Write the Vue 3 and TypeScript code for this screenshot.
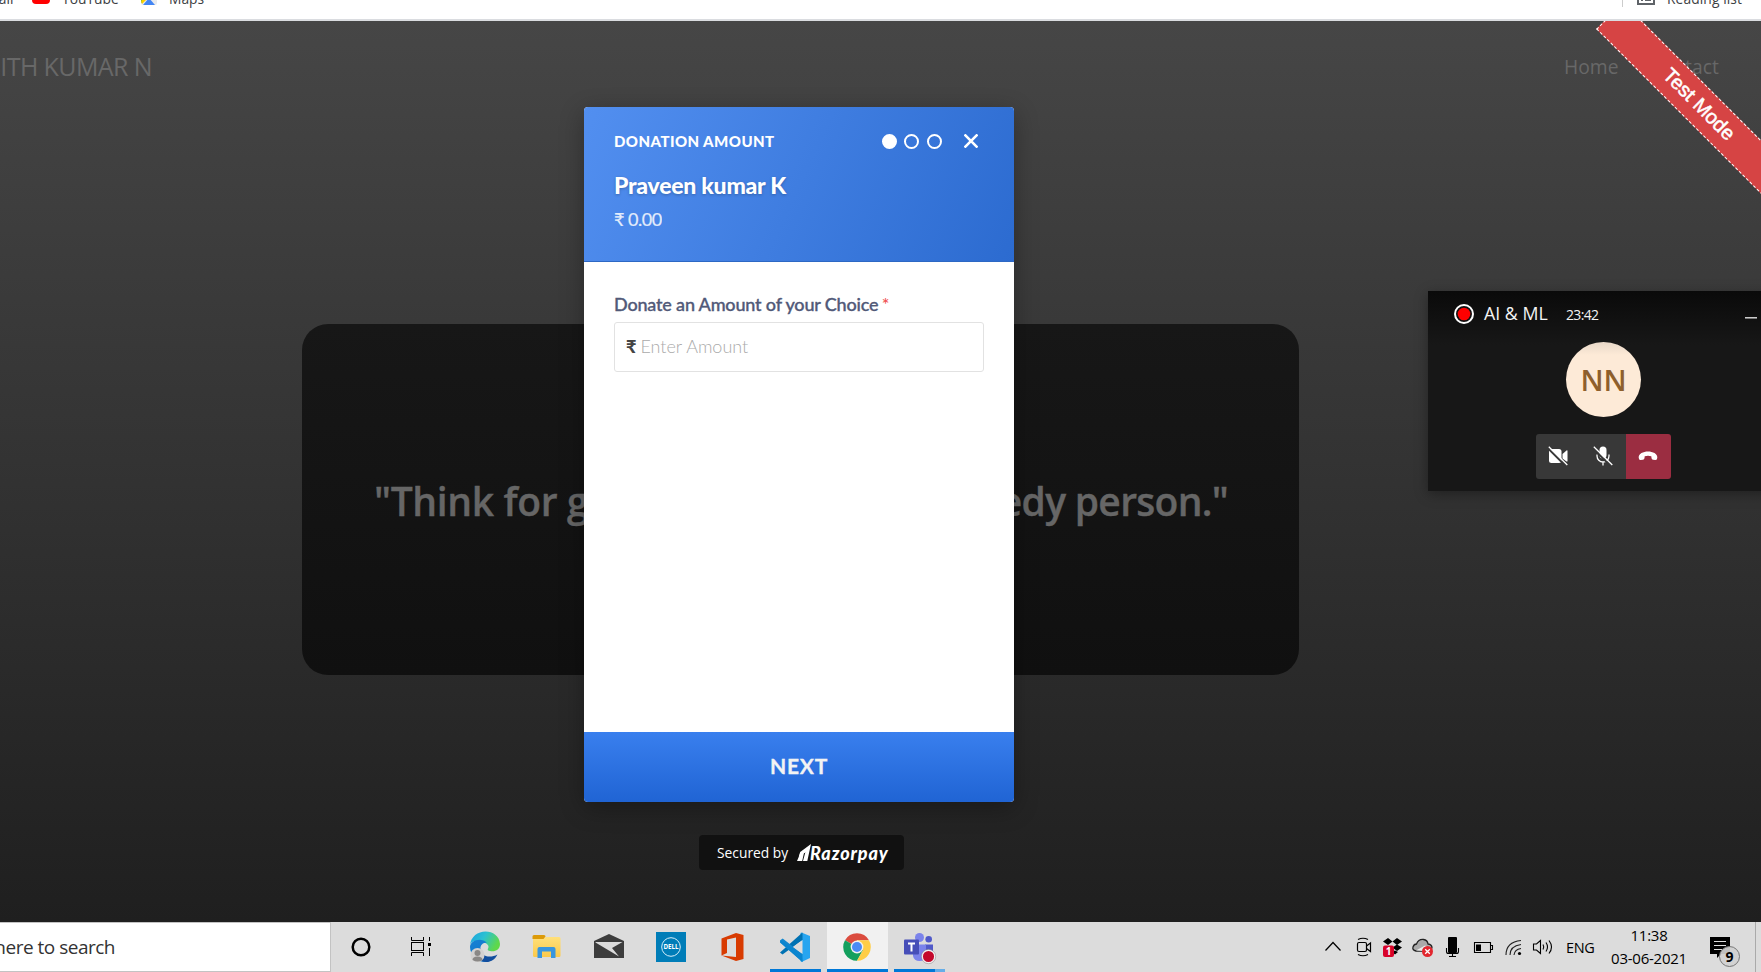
<script setup lang="ts">
const digits = [true, false, false]
const merchant = 'Praveen kumar K'
</script>

<template>
  <div class="screen">
    <header class="bookmarks">
      <span class="bm bm-mail">Gmail</span>
      <span class="yt"></span>
      <span class="bm bm-yt">YouTube</span>
      <svg class="maps" width="16" height="16" viewBox="0 0 16 16">
        <rect width="16" height="16" rx="2" fill="#e8eaed" />
        <path d="M0 2v12L11 3V0H2z" fill="#34a853" />
        <path d="M0 12l10-10 2 2L1 15z" fill="#fbd000" />
        <path d="M2 16l6-7 6 7z" fill="#4285f4" />
      </svg>
      <span class="bm bm-maps">Maps</span>
      <span class="spacer"></span>
      <span class="bm-divider"></span>
      <svg class="list-ico" width="18" height="18" viewBox="0 0 18 18" fill="none" stroke="#5f6368" stroke-width="2">
        <rect x="1" y="1" width="16" height="15" /><path d="M4 8h2M4 12h2M8 8h6M8 12h6" />
      </svg>
      <span class="bm bm-list">Reading list</span>
    </header>

    <main class="page">
      <nav class="nav">
        <span class="brand">ITH KUMAR N</span>
        <span class="link">Home</span>
        <span class="link contact">Contact</span>
      </nav>
      <section class="quote">
        <span class="q-left">"Think for g</span>
        <span class="q-right">edy person."</span>
      </section>

      <div class="ribbon"><span>Test Mode</span></div>

      <div class="modal">
        <div class="m-head">
          <div class="m-top">
            <span class="m-kind">DONATION AMOUNT</span>
            <span v-for="(on, i) in digits" :key="i" class="dot" :class="{ on }"></span>
            <svg class="close" width="14" height="14" viewBox="0 0 14 14" stroke="#fff" stroke-width="2.600"><path d="M.5.500l13 13M13.500.500L.5 13.500" /></svg>
          </div>
          <div class="m-name">{{ merchant }}</div>
          <div class="m-sum">₹ 0.00</div>
        </div>
        <div class="m-body">
          <label class="m-label">Donate an Amount of your Choice <i>*</i></label>
          <div class="m-input"><b>₹</b><span>Enter Amount</span></div>
        </div>
        <button class="m-next">NEXT</button>
      </div>

      <div class="secured">
        <span class="s-by">Secured by</span>
        <svg width="14" height="17" viewBox="0 0 14 17"><path d="M14 0L10.300 17H6l2.400-9-4.200 3zM3.200 9.500L7.400 7 5.200 17H0z" fill="#fff" /><path d="M14 0L3.200 8 1.800 12.500 9 8z" fill="#fff" /></svg>
        <span class="s-rzp">Razorpay</span>
      </div>

      <aside class="call">
        <div class="c-top">
          <svg width="20" height="20" viewBox="0 0 20 20"><circle cx="10" cy="10" r="9" fill="#111" stroke="#fff" stroke-width="2" /><circle cx="10" cy="10" r="6.300" fill="#f00" /></svg>
          <span class="c-name">AI &amp; ML</span>
          <span class="c-time">23:42</span>
          <span class="c-min"></span>
        </div>
        <div class="avatar">NN</div>
        <div class="c-actions">
          <span class="c-btn">
            <svg width="20" height="20" viewBox="0 0 20 20"><rect x="1" y="3" width="12.500" height="14" rx="2.500" fill="#fff" /><path d="M14.500 8l4-3.500q1-.5 1 .6v9.800q0 1-1 .5l-4-3z" fill="#fff" /><path d="M0 2.300l17.500 17.500" stroke="#383838" stroke-width="2" /><path d="M.8.800l18.500 18.200" stroke="#fff" stroke-width="1.300" /></svg>
          </span>
          <span class="c-btn">
            <svg width="20" height="20" viewBox="0 0 20 20"><rect x="6.500" y="0.500" width="7" height="12" rx="3.500" fill="#fff" /><path d="M4 8.500v1.500a6 6 0 0 0 12 0V8.500M10 16v3.500" fill="none" stroke="#fff" stroke-width="1.300" /><path d="M0 2.300l17.500 17.500" stroke="#383838" stroke-width="2" /><path d="M.8.800l18.500 18.200" stroke="#fff" stroke-width="1.300" /></svg>
          </span>
          <span class="c-btn end">
            <svg width="20" height="20" viewBox="0 0 20 20"><path d="M.7 11.800C.2 3.500 19.800 3.500 19.300 11.800q-.1 2.500-2 2.300l-2.200-.3q-1.500-.2-1.600-1.700l-.2-1.800q-3.300-1-6.600 0l-.2 1.800q-.1 1.500-1.600 1.700l-2.200.3Q.8 14.300.7 11.800z" fill="#fff" /></svg>
          </span>
        </div>
      </aside>
    </main>

    <footer class="taskbar">
      <div class="search"><span>Type here to search</span></div>
      <span class="app"><svg viewBox="0 0 62 50"><circle cx="31" cy="25" r="8.300" fill="none" stroke="#000" stroke-width="2.500" /></svg></span>
      <span class="app"><svg viewBox="0 0 62 50" fill="none" stroke="#000" stroke-width="1"><path d="M19.500 15v3.500h12V15M19.500 34v-3.500h12V34M37.500 15v4M37.500 26v8" /><rect x="19.500" y="20.500" width="12" height="8" /><path d="M36 21h3v3h-3z" fill="#000" stroke="none" /></svg></span>
      <span class="app">
        <svg viewBox="0 0 62 50">
          <defs>
            <linearGradient id="eg" x1="0" y1="0" x2="1" y2="0.400"><stop offset="0" stop-color="#1a9fe0" /><stop offset=".5" stop-color="#2bc1d2" /><stop offset="1" stop-color="#5fd84a" /></linearGradient>
            <linearGradient id="eb" x1="0" y1="0" x2="0.500" y2="1"><stop offset="0" stop-color="#1682d4" /><stop offset="1" stop-color="#1275c9" /></linearGradient>
          </defs>
          <path d="M16 24C17 5 45 5 46 22c0 6-5 8-10 7-4-.8-1.500-2-1.500-4.500 0-5-18.500-9-18.500-.5z" fill="url(#eg)" />
          <path d="M16 25c0-7 12-10 17-4-5-1-8 4-6 9 2 6 9 9 14 5-4 6-13 6.500-18.500 2Q16 32 16 25z" fill="url(#eb)" />
          <path d="M26.500 26c-1 8 9 11 17 6.500C38 44 23 41 24 32z" fill="#124e9e" />
          <circle cx="23.500" cy="33" r="7" fill="#d3d1d0" /><circle cx="23.500" cy="31" r="3" fill="#8a8886" /><path d="M18.500 38q0-3.500 5-3.500t5 3.500q-4.800 3-10 0z" fill="#8a8886" />
        </svg>
      </span>
      <span class="app">
        <svg viewBox="0 0 62 50">
          <defs><linearGradient id="fd" x1="0" y1="0" x2="0" y2="1"><stop offset="0" stop-color="#ffe07a" /><stop offset="1" stop-color="#fbc94b" /></linearGradient></defs>
          <path d="M17 17h10l3-2h13q1.500 0 1.500 1.500v17q0 1.500-1.500 1.500H18.500Q17 35 17 33.500z" fill="url(#fd)" /><path d="M16.500 14.500q0-1.500 1.500-1.500h10q1.500 0 1.500 1.500l-2 2.500h-11z" fill="#dc9a08" />
          <path d="M21.500 36V27q0-2 2-2h14q2 0 2 2v9H35v-6.500h-9V36z" fill="#3a96dd" />
        </svg>
      </span>
      <span class="app"><svg viewBox="0 0 62 50"><path d="M16 19l15-7 15 7v17H16z" fill="#3d3d3d" /><path d="M17.500 20h27L34 26l7 8.500L17.500 20.500z" fill="#dcdcdc" /></svg></span>
      <span class="app"><svg viewBox="0 0 62 50"><path d="M16 10h30v30H16z" fill="#007db8" /><circle cx="31" cy="25" r="9.300" fill="none" stroke="#d9f0fa" stroke-width="1" /><text x="31" y="27.300" text-anchor="middle" textLength="15" lengthAdjust="spacingAndGlyphs" class="dell">DELL</text></svg></span>
      <span class="app"><svg viewBox="0 0 62 50"><path d="M19.500 16.500L34 11l7.500 2v24L34 39l-14.500-5.500L34 35V15.500l-9 2V31l-5.500 2.500z" fill="#d83b01" /></svg></span>
      <span class="app">
        <svg viewBox="0 0 62 50"><path d="M37.500 10.500L46 14v22l-8.500 4-1-1V11z" fill="#27a5f0" /><path d="M16 30.500l2.500 2L38.500 18v-7.500z" fill="#0072b3" /><path d="M16.200 18.200l2.500-1.800L38.500 32v8L16.200 20.500z" fill="#1187cf" /><path d="M38.500 18v14L29 25z" fill="#dcdcdc" /><path d="M16.200 18.200v2.300L38.500 40l-.8-8z" fill="#0a85cf" /></svg>
        <i class="bar wide"></i>
      </span>
      <span class="app active">
        <svg viewBox="0 0 62 50">
          <path d="M31 25L19 18.200A13.800 13.800 0 0 1 43 18.200L31 18.200z" fill="#db4c3f" /><path d="M31 25L19 18.200A13.800 13.800 0 0 0 31 38.800L37 28z" fill="#14a05e" /><path d="M31 18.200H43A13.800 13.800 0 0 1 31 38.800L37 28z" fill="#ffcd46" /><circle cx="31" cy="25" r="6.400" fill="#f1f1f1" /><circle cx="31" cy="25" r="5" fill="#4a8bf5" />
        </svg>
        <i class="bar full"></i>
      </span>
      <span class="app">
        <svg viewBox="0 0 62 50">
          <circle cx="31.500" cy="15.500" r="4.500" fill="#7b83eb" /><circle cx="40.700" cy="17.300" r="3.300" fill="#5059c9" /><path d="M37 22.500h8v8q-1 5-8 4z" fill="#5059c9" /><path d="M25 22.500h13V33q-1 6-6.500 6T25 34z" fill="#7b83eb" />
          <rect x="16" y="17.500" width="15" height="15" rx="1" fill="#464eb8" /><path d="M20 21.500h7M23.500 21.500v8" stroke="#fff" stroke-width="2" />
          <circle cx="40.500" cy="34.500" r="6.300" fill="#c4092c" stroke="#f1f1f1" stroke-width="1.500" /><circle cx="40.500" cy="34.500" r="7.200" fill="none" stroke="#888" stroke-width=".5" />
        </svg>
        <i class="bar teams"></i>
      </span>
      <span class="spacer"></span>
      <div class="tray">
        <svg viewBox="0 0 30 50" fill="none" stroke="#000" stroke-width="1.200"><path d="M7.500 28.500l7.500-8 7.500 8" /></svg>
        <svg viewBox="0 0 30 50" fill="none" stroke="#000" stroke-width="1.200"><rect x="9.500" y="20.500" width="9" height="9" rx="1.500" /><path d="M18.500 24l4-3v8.500l-4-3M10 17.500q5-2.500 10 0M10 32.500q5 2.500 10 0" /></svg>
        <svg viewBox="0 0 30 50"><path d="M5 19.500L10 16l4.500 3.500L10 23zM14.500 19.500L19 16l5 3.500-5 3.500zM14.500 25.500l4.500-3 5 3-5 3.500zM14 30l3-1.500 3 1.500-3 2.500z" fill="#000" /><rect x="5" y="23.500" width="11" height="11.500" rx="2" fill="#d8032a" /><text x="10.500" y="32.800" text-anchor="middle" class="badge">1</text></svg>
        <svg viewBox="0 0 30 50"><path d="M8 29q-4-1-3-4 1-3 3.500-3 2-5 7-4.500 4 .5 4.500 4.500 4 .5 4 4l-4 3z" fill="#aaa" stroke="#222" stroke-width="1.300" /><path d="M8 28.500l9-5 4 2-5 3.500z" fill="#eee" /><circle cx="19.500" cy="29.500" r="5.500" fill="#e2262e" /><path d="M17.200 27.200l4.600 4.600M21.800 27.200l-4.600 4.600" stroke="#fff" stroke-width="1.300" /></svg>
        <svg viewBox="0 0 30 50"><rect x="10" y="15" width="9" height="16" rx="1" fill="#000" /><path d="M8.500 26v3.500q0 2 2 2h8q2 0 2-2V26M14.500 31v3.500M11 34.500h7" fill="none" stroke="#000" stroke-width="1.100" /></svg>
        <svg viewBox="0 0 30 50"><path d="M6.500 20.500h16v10h-16zM23 23.500h1.500v4H23" fill="none" stroke="#000" stroke-width="1.100" /><path d="M8 22.500h5v6.500H8z" fill="#000" /></svg>
        <svg viewBox="0 0 30 50" fill="none" stroke="#222" stroke-width="1.100"><path d="M8 33Q8 20 23 18.500M12 33q0-9 11-10.500M16 33q.5-5.500 7-6.500" /><circle cx="21.500" cy="31.500" r="1.600" fill="#000" stroke="none" /></svg>
        <svg viewBox="0 0 30 50" fill="none" stroke="#000" stroke-width="1.100"><path d="M5.500 22h3l4-3.500v13l-4-3.500h-3zM15 22.500q1.500 2.500 0 5M18 20.500q3 4.500 0 9M21 18.500q5 6.500 0 13" /></svg>
        <span class="lang">ENG</span>
        <div class="clock"><span class="hm">11:38</span><span class="date">03-06-2021</span></div>
        <svg class="notes" width="32" height="50" viewBox="0 0 32 50"><path d="M1 15h20v17h-9l-4 4v-4H1z" fill="#000" /><path d="M5 19.500h12M5 23.500h12M5 27.500h8" stroke="#ddd" /><circle cx="20.500" cy="34.500" r="10" fill="#d0d0d0" fill-opacity=".92" stroke="#777" /><text x="20.500" y="39.500" text-anchor="middle" class="count">9</text></svg>
        <span class="peek"></span>
      </div>
    </footer>
  </div>
</template>

<style>
body { margin: 0; overflow: hidden; }
</style>

<style scoped>
.screen { width: 1761px; height: 972px; display: flex; flex-direction: column; overflow: hidden; font-family: "Open Sans", "Noto Sans", sans-serif; }
.spacer { flex: 1; }
.bookmarks { box-sizing: border-box; height: 21px; flex: none; background: #fff; border-bottom: 2px solid #dadce0; display: flex; align-items: flex-start; overflow: hidden; }
.bm { font-size: 13.800px; line-height: 18px; margin-top: -10px; color: #3c4043; white-space: nowrap; }
.bm-mail { width: 32px; margin-left: 0; text-indent: -24px; }
.yt { width: 18px; height: 14px; border-radius: 4px; background: #f00; margin-top: -10px; }
.bm-yt { margin-left: 12px; width: 79px; }
.maps { margin-top: -11px; }
.bm-maps { margin-left: 12px; }
.bm-divider { width: 1px; height: 7px; background: #ccc; }
.list-ico { margin: -12px 12px 0 14px; }
.bm-list { width: 94px; letter-spacing: .1px; }

.page { position: relative; height: 901px; flex: none; overflow: hidden; background: linear-gradient(#464646, #1f1f1f); display: flex; flex-direction: column; }
.nav { width: 100%; height: 91px; display: flex; align-items: center; color: #686868; font-size: 19.300px; }
.brand { width: 152px; flex: none; display: flex; justify-content: flex-end; font-size: 25px; line-height: 34px; margin-top: -1px; white-space: nowrap; letter-spacing: -.6px; }
.link { margin-left: 1412px; }
.contact { margin-left: 31px; }
.quote { box-sizing: border-box; width: 997px; height: 351px; margin: 212px 0 0 302px; border-radius: 26px; background: linear-gradient(#171717, #101010); display: flex; align-items: center; justify-content: space-between; padding: 1px 71px 0 72px; color: #666; font-size: 39px; font-weight: 600; -webkit-text-stroke: .4px #666; }
.q-left { letter-spacing: -.35px; }
.q-right { letter-spacing: -.7px; }

.ribbon { position: absolute; left: 1573px; top: 64px; width: 250px; height: 38px; box-sizing: border-box; background: #d64444; border: 1px dashed #fff; transform: rotate(45deg); color: #fff; font: 20px/35px "Liberation Sans", sans-serif; text-align: center; text-indent: 2px; -webkit-text-stroke: .5px #fff; }

.modal { position: absolute; left: 584px; top: 86px; width: 430px; height: 695px; border-radius: 4px; overflow: hidden; background: #fff; display: flex; flex-direction: column; font-family: Lato, sans-serif; box-shadow: 0 6px 24px rgba(0, 0, 0, .3); }
.m-head { box-sizing: border-box; height: 155px; padding: 23px 30px 0; color: #fff; background: linear-gradient(115deg, #528ff0, #2c6bd0); border-bottom: 1px solid #2d68c4; }
.m-top { display: flex; align-items: center; height: 22px; }
.m-kind { flex: 1; font-size: 15px; font-weight: 900; letter-spacing: .45px; }
.dot { box-sizing: border-box; width: 15px; height: 15px; border: 2px solid #fff; border-radius: 50%; margin-right: 7.500px; }
.dot.on { background: #fff; }
.close { margin: -1px 6px 0 15px; }
.m-name { margin-top: 16px; font-size: 23px; line-height: 34px; font-weight: 900; letter-spacing: -.25px; text-shadow: 0 1px 3px rgba(0, 0, 0, .25); }
.m-sum { font-size: 18px; line-height: 34px; opacity: .85; letter-spacing: -.5px; -webkit-text-stroke: .2px #fff; }
.m-body { flex: 1; padding: 30px 30px 0; }
.m-label { display: block; font-size: 18px; line-height: 24px; color: #515978; font-weight: 500; white-space: nowrap; letter-spacing: -.17px; -webkit-text-stroke: .35px #515978; }
.m-label i { color: #f05050; font-style: normal; -webkit-text-stroke: 0; margin-left: -1px; }
.m-input { box-sizing: border-box; margin-top: 6px; height: 50px; border: 1px solid #e2e2e2; border-radius: 3px; display: flex; align-items: center; padding: 0 0 2px 11px; font-size: 18px; color: #aaa; font-weight: 300; }
.m-input b { color: #444; margin-right: 4px; font-weight: 900; }
.m-next { height: 70px; border: 0; padding: 0 0 4px; background: linear-gradient(#397fee, #2064d4); color: #f3f3f3; font: 700 21px Lato, sans-serif; letter-spacing: .8px; -webkit-text-stroke: .3px #f3f3f3; }

.secured { position: absolute; left: 699px; top: 814px; width: 205px; height: 35px; box-sizing: border-box; border-radius: 4px; background: #111; color: #fff; display: flex; align-items: center; padding-left: 18px; }
.s-by { width: 80px; font: 13.800px "Open Sans", sans-serif; }
.s-rzp { font: italic 900 18px Lato, sans-serif; letter-spacing: .85px; margin-left: -1px; }

.call { position: absolute; left: 1428px; top: 270px; width: 350px; height: 200px; background: linear-gradient(#0a0a0a, #171717 54px); box-shadow: 0 3px 12px rgba(0, 0, 0, .35); color: #f3f3f3; }
.c-top { display: flex; align-items: center; height: 46px; padding-left: 26px; }
.c-name { margin: -2px 0 0 10px; width: 82px; font-size: 17.800px; white-space: nowrap; }
.c-time { width: 179px; font-size: 14px; letter-spacing: -.65px; }
.c-min { width: 12px; height: 1px; background: #ccc; border-bottom: 1px solid #777; margin-top: 8px; }
.avatar { width: 75px; height: 75px; border-radius: 50%; margin: 5px 0 0 138px; background: linear-gradient(#e8d8c8, #fdead7 13px); color: #8e5f2c; font-size: 29.500px; line-height: 75px; text-align: center; font-weight: 600; }
.c-actions { margin: 17px 0 0 108px; width: 135px; height: 45px; display: flex; border-radius: 3px; overflow: hidden; }
.c-btn { width: 45px; display: flex; align-items: center; justify-content: center; background: #383838; }
.c-btn svg { margin: -1px 1px 0 0; }
.c-btn.end { background: #9b2d41; }

.taskbar { height: 50px; flex: none; background: #dcdcdc; display: flex; color: #000; }
.search { box-sizing: border-box; width: 331px; margin-right: -1px; border: 1px solid #c3c3c3; border-left: 0; background: #fff; display: flex; align-items: center; font-size: 19px; color: #333; overflow: hidden; }
.search span { width: 115px; display: flex; justify-content: flex-end; white-space: nowrap; letter-spacing: -.5px; }
.app { position: relative; width: 62px; flex: none; }
.app svg { display: block; width: 62px; height: 50px; }
.active { background: linear-gradient(90deg, transparent 1px, #f1f1f1 1px); }
.bar { position: absolute; bottom: 0; height: 3px; background: #0078d7; }
.wide { left: 6px; width: 51px; }
.full { left: 1px; width: 61px; }
.teams { left: 6px; width: 51px; background: linear-gradient(90deg, #0078d7 41px, #66aee8 41px); }
.dell { font: 700 7px "Open Sans", sans-serif; fill: #fff; }
.badge { font: 700 10px "Open Sans", sans-serif; fill: #fff; }
.count { font: 700 14px "Open Sans", sans-serif; }
.tray { width: 443px; display: flex; align-items: center; }
.tray > svg:not(.notes) { width: 30px; height: 50px; flex: none; }
.lang { margin-left: 8px; width: 30px; flex: none; font-size: 14.500px; letter-spacing: -.4px; }
.clock { width: 106px; flex: none; margin-left: 0; display: flex; flex-direction: column; align-items: center; font-size: 15px; line-height: 23px; letter-spacing: -.25px; }
.clock span { white-space: nowrap; }
.notes { margin-left: 7px; flex: none; }
.peek { width: 1px; height: 50px; background: #aaa; margin-left: 14px; flex: none; }
</style>
